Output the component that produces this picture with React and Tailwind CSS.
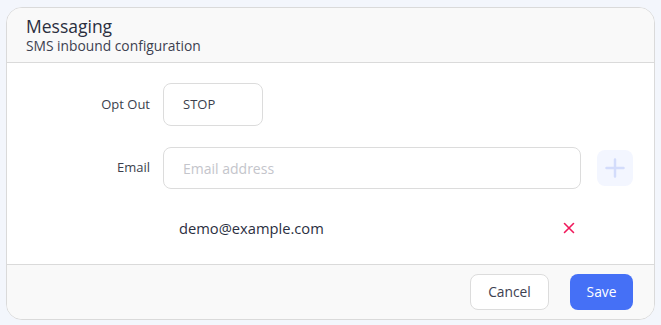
export default function App() {
  const font = { fontFamily: '"Open Sans", "Noto Sans", sans-serif' };
  return (
    <div className="w-[661px] h-[325px] bg-[#f3f6fc] pt-[7px] pl-[6px]" style={font}>
      <div className="w-[649px] h-[313px] border border-[#dadada] rounded-[16px] bg-white overflow-hidden flex flex-col">
        <div className="h-[55px] bg-[#f9f9f9] border-b border-[#dadada] px-[19px] pt-[8px] shrink-0">
          <div className="text-[17.5px] leading-[21px] text-[#2b2f3f]">Messaging</div>
          <div className="text-[13.8px] leading-[18px] text-[#3d4150]">SMS inbound configuration</div>
        </div>
        <div className="flex-1 pt-[20px]">
          <div className="flex items-center">
            <div className="w-[143px] text-right text-[13px] text-[#3b3f4d]">Opt Out</div>
            <div className="ml-[13px] w-[100px] h-[43px] border border-[#dcdcdc] rounded-[8px] flex items-center pl-[19px] text-[13px] text-[#3b3f4d]">STOP</div>
          </div>
          <div className="flex items-center mt-[21px]">
            <div className="w-[143px] text-right text-[13px] text-[#3b3f4d]">Email</div>
            <div className="ml-[13px] w-[418px] h-[42px] border border-[#dcdcdc] rounded-[8px] flex items-center pl-[19px] text-[14px] text-[#c4c5cb]">Email address</div>
            <div className="ml-[16px] w-[36px] h-[36px] rounded-[8px] bg-[#f3f6ff] flex items-center justify-center">
              <svg width="20" height="20" viewBox="0 0 20 20" fill="none" stroke="#d3dcfb" strokeWidth="2.5" strokeLinecap="round">
                <path d="M10 1.5v17M1.5 10h17" />
              </svg>
            </div>
          </div>
          <div className="flex items-center mt-[27px] h-[24px]">
            <div className="ml-[172px] w-[380px] text-[14.7px] text-[#2b2f3f]">demo@example.com</div>
            <svg className="ml-[4px]" width="12" height="12" viewBox="0 0 12 12" fill="none" stroke="#f0195b" strokeWidth="1.6" strokeLinecap="round">
              <path d="M1.5 1.5l9 9M10.5 1.5l-9 9" />
            </svg>
          </div>
        </div>
        <div className="h-[55px] bg-[#f9f9f9] border-t border-[#dadada] shrink-0 flex items-start justify-end pt-[9px] pr-[21px] gap-[21px]">
          <button className="w-[79px] h-[36px] bg-white border border-[#dcdcdc] rounded-[8px] text-[13.8px] text-[#3d4150]">Cancel</button>
          <button className="w-[63px] h-[36px] bg-[#4570f6] rounded-[8px] text-[13.8px] text-white">Save</button>
        </div>
      </div>
    </div>
  );
}
